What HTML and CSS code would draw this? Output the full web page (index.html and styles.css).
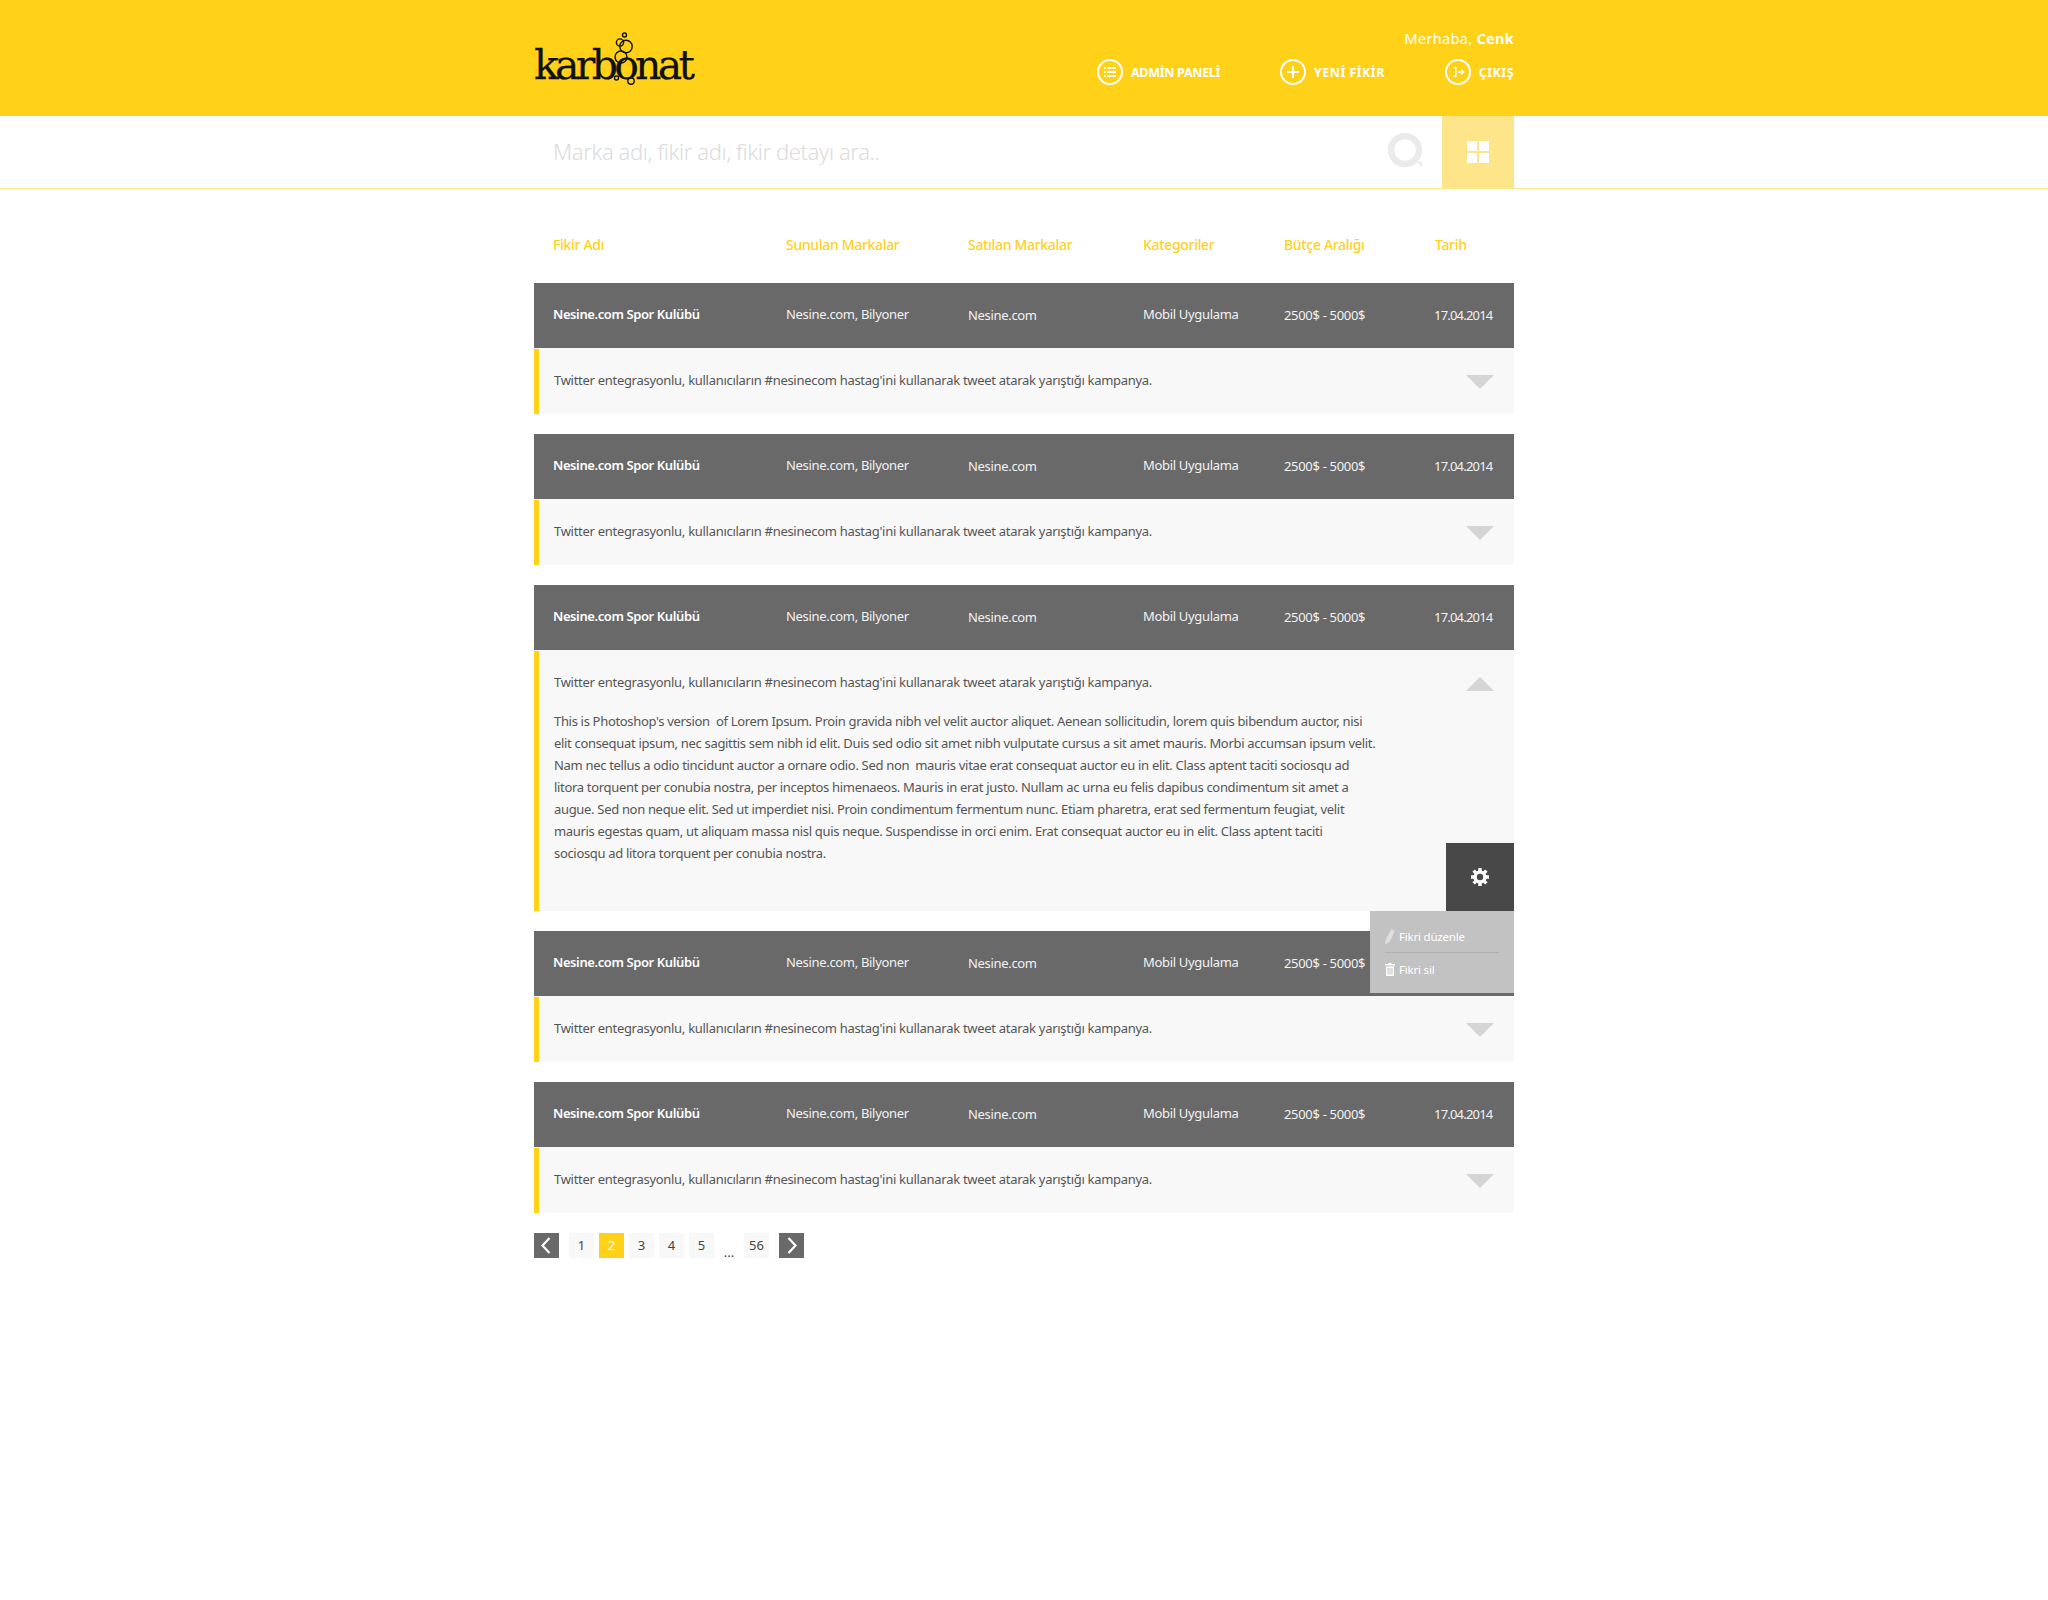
FILE: index.html
```html
<!DOCTYPE html>
<html lang="tr">
<head>
<meta charset="utf-8">
<title>Karbonat</title>
<link rel="stylesheet" href="styles.css">
</head>
<body>
<header class="topbar">
  <div class="wrap topbar-inner">
    <a class="logo">
      <span class="logo-text">karbonat</span>
      <svg class="logo-bubbles" width="60" height="60" viewBox="0 0 60 60" fill="none" stroke="#111" stroke-width="1.4">
        <circle cx="25.5" cy="5" r="2"/><circle cx="21" cy="12.5" r="3.6"/><circle cx="27" cy="16.5" r="6.2"/><circle cx="22" cy="27" r="6"/><circle cx="17.5" cy="48" r="2"/><circle cx="32" cy="51" r="3.2"/>
      </svg>
    </a>
    <div class="user">
      <div class="hello">Merhaba, <b>Cenk</b></div>
      <nav class="nav">
        <a class="nav-item tight">
          <svg class="ring" width="26" height="26" viewBox="0 0 26 26"><circle cx="13" cy="13" r="12" fill="none" stroke="#fff" stroke-width="2"/><path d="M7 8h2v2H7zM7 12h2v2H7zM7 16h2v2H7zM10 8h9v2h-9zM10 12h9v2h-9zM10 16h9v2h-9z" fill="#fff"/></svg>
          <span>ADMİN PANELİ</span>
        </a>
        <a class="nav-item">
          <svg class="ring" width="26" height="26" viewBox="0 0 26 26"><circle cx="13" cy="13" r="12" fill="none" stroke="#fff" stroke-width="2"/><path d="M12 7h2v5h5v2h-5v5h-2v-5H7v-2h5z" fill="#fff"/></svg>
          <span>YENİ FİKİR</span>
        </a>
        <a class="nav-item">
          <svg class="ring" width="26" height="26" viewBox="0 0 26 26"><circle cx="13" cy="13" r="12" fill="none" stroke="#fff" stroke-width="2"/><path d="M8 8h3.500v10H8v-1.500h2v-7H8zM13 12h3v-2l4 3-4 3v-2h-3z" fill="#fff"/></svg>
          <span>ÇIKIŞ</span>
        </a>
      </nav>
    </div>
  </div>
</header>

<section class="searchbar">
  <div class="wrap search-inner">
    <div class="search-field">Marka adı, fikir adı, fikir detayı ara..</div>
    <svg class="search-icon" width="34" height="36" viewBox="0 0 34 36"><circle cx="17" cy="17" r="14" fill="none" stroke="#ebebeb" stroke-width="6.5"/><path d="M28 28l6 1v5z" fill="#ebebeb"/></svg>
    <button class="view-btn" type="button">
      <svg width="22" height="22" viewBox="0 0 22 22" fill="#fff"><rect width="10" height="10"/><rect x="12" width="10" height="10"/><rect y="12" width="10" height="10"/><rect x="12" y="12" width="10" height="10"/></svg>
    </button>
  </div>
</section>

<main class="wrap">
  <div class="cols heads">
    <span>Fikir Adı</span><span>Sunulan Markalar</span><span>Satılan Markalar</span><span>Kategoriler</span><span>Bütçe Aralığı</span><span>Tarih</span>
  </div>

  <article class="idea">
    <div class="cols row"><strong>Nesine.com Spor Kulübü</strong><span>Nesine.com, Bilyoner</span><span class="low">Nesine.com</span><span>Mobil Uygulama</span><span class="low">2500$ - 5000$</span><span class="low date">17.04.2014</span></div>
    <div class="desc"><p class="lead">Twitter entegrasyonlu, kullanıcıların #nesinecom hastag'ini kullanarak tweet atarak yarıştığı kampanya.</p><i class="tri"></i></div>
  </article>

  <article class="idea">
    <div class="cols row"><strong>Nesine.com Spor Kulübü</strong><span>Nesine.com, Bilyoner</span><span class="low">Nesine.com</span><span>Mobil Uygulama</span><span class="low">2500$ - 5000$</span><span class="low date">17.04.2014</span></div>
    <div class="desc"><p class="lead">Twitter entegrasyonlu, kullanıcıların #nesinecom hastag'ini kullanarak tweet atarak yarıştığı kampanya.</p><i class="tri"></i></div>
  </article>

  <article class="idea open">
    <div class="cols row"><strong>Nesine.com Spor Kulübü</strong><span>Nesine.com, Bilyoner</span><span class="low">Nesine.com</span><span>Mobil Uygulama</span><span class="low">2500$ - 5000$</span><span class="low date">17.04.2014</span></div>
    <div class="desc">
      <p class="lead">Twitter entegrasyonlu, kullanıcıların #nesinecom hastag'ini kullanarak tweet atarak yarıştığı kampanya.</p><i class="tri up"></i>
      <p class="body">This is Photoshop's version&nbsp; of Lorem Ipsum. Proin gravida nibh vel velit auctor aliquet. Aenean sollicitudin, lorem quis bibendum auctor, nisi<br>elit consequat ipsum, nec sagittis sem nibh id elit. Duis sed odio sit amet nibh vulputate cursus a sit amet mauris. Morbi accumsan ipsum velit.<br>Nam nec tellus a odio tincidunt auctor a ornare odio. Sed non&nbsp; mauris vitae erat consequat auctor eu in elit. Class aptent taciti sociosqu ad<br>litora torquent per conubia nostra, per inceptos himenaeos. Mauris in erat justo. Nullam ac urna eu felis dapibus condimentum sit amet a<br>augue. Sed non neque elit. Sed ut imperdiet nisi. Proin condimentum fermentum nunc. Etiam pharetra, erat sed fermentum feugiat, velit<br>mauris egestas quam, ut aliquam massa nisl quis neque. Suspendisse in orci enim. Erat consequat auctor eu in elit. Class aptent taciti<br>sociosqu ad litora torquent per conubia nostra.</p>
      <button class="gear" type="button">
        <svg width="20" height="20" viewBox="0 0 20 20"><g stroke="#fff" stroke-width="3.4"><path d="M10 1v18M1 10h18M3.6 3.6l12.8 12.8M16.4 3.6L3.6 16.4"/></g><circle cx="10" cy="10" r="6.6" fill="#fff"/><circle cx="10" cy="10" r="3.2" fill="#484848"/></svg>
      </button>
      <div class="menu">
        <a class="menu-item edit"><svg width="10" height="15" viewBox="0 0 10 15"><path d="M6.500 0l3.500 1.500-5 11L1 15l-1-.5L.5 11z" fill="#dedede"/></svg><span>Fikri düzenle</span></a>
        <a class="menu-item"><svg width="10" height="13" viewBox="0 0 10 13" fill="#fff"><path d="M3.500 0h3v1H10v1.500H0V1h3.500zM1 3.500h8V13H1zM2.500 5v6.500h1V5zM4.500 5v6.500h1V5zM6.500 5v6.500h1V5z" fill-rule="evenodd"/></svg><span>Fikri sil</span></a>
      </div>
    </div>
  </article>

  <article class="idea">
    <div class="cols row"><strong>Nesine.com Spor Kulübü</strong><span>Nesine.com, Bilyoner</span><span class="low">Nesine.com</span><span>Mobil Uygulama</span><span class="low">2500$ - 5000$</span><span class="low date">17.04.2014</span></div>
    <div class="desc"><p class="lead">Twitter entegrasyonlu, kullanıcıların #nesinecom hastag'ini kullanarak tweet atarak yarıştığı kampanya.</p><i class="tri"></i></div>
  </article>

  <article class="idea">
    <div class="cols row"><strong>Nesine.com Spor Kulübü</strong><span>Nesine.com, Bilyoner</span><span class="low">Nesine.com</span><span>Mobil Uygulama</span><span class="low">2500$ - 5000$</span><span class="low date">17.04.2014</span></div>
    <div class="desc"><p class="lead">Twitter entegrasyonlu, kullanıcıların #nesinecom hastag'ini kullanarak tweet atarak yarıştığı kampanya.</p><i class="tri"></i></div>
  </article>

  <nav class="pager">
    <a class="pg dark"><svg width="25" height="25" viewBox="0 0 25 25"><path d="M15.500 5l-7 7.500 7 7.500" fill="none" stroke="#fff" stroke-width="2.200"/></svg></a>
    <a class="pg first">1</a><a class="pg on">2</a><a class="pg">3</a><a class="pg">4</a><a class="pg">5</a>
    <span class="dots">...</span>
    <a class="pg">56</a>
    <a class="pg dark next"><svg width="25" height="25" viewBox="0 0 25 25"><path d="M9.500 5l7 7.500-7 7.500" fill="none" stroke="#fff" stroke-width="2.200"/></svg></a>
  </nav>
</main>
</body>
</html>
```

FILE: styles.css
```css
* { box-sizing: border-box; }
html, body { margin: 0; padding: 0; }
body {
  background: #fff;
  min-height: 1600px;
  font-family: "Noto Sans", "Open Sans", sans-serif;
  font-size: 13px;
  letter-spacing: -0.32px;
  color: #555;
}
p { margin: 0; }
.wrap { width: 980px; margin-left: 534px; }

.topbar { height: 116px; background: #ffd119; }
.topbar-inner { height: 116px; display: flex; justify-content: space-between; }
.logo { position: relative; display: block; width: 170px; margin-top: 30px; height: 70px; }
.logo-text {
  display: block;
  margin-top: 13px;
  font-family: "DejaVu Serif", serif;
  font-size: 41px;
  line-height: 44px;
  letter-spacing: -3.75px;
  color: #111;
  -webkit-text-stroke: 0.25px #111;
}
.logo-bubbles { position: absolute; left: 65px; top: 0; }
.user { display: flex; flex-direction: column; align-items: flex-end; padding-top: 28px; }
.hello { color: #fff; font-size: 14.500px; line-height: 20px; letter-spacing: 0.3px; }
.nav { display: flex; gap: 60px; margin-top: 11px; }
.nav-item { display: flex; align-items: center; gap: 8px; color: #fff; font-weight: 700; font-size: 12.500px; letter-spacing: 0.45px; height: 26px; }
.nav-item.tight { letter-spacing: -0.3px; }

.searchbar { height: 73px; border-bottom: 1px solid #ffe78c; }
.search-inner { display: flex; align-items: flex-start; height: 72px; }
.search-field { flex: 1; padding: 17px 0 0 19px; font-size: 22px; line-height: 36px; font-weight: 300; color: #dcdcdc; letter-spacing: -0.4px; }
.search-icon { margin: 17px 20px 0 0; }
.view-btn { width: 72px; height: 72px; border: 0; padding: 0; background: #ffe58a; display: flex; align-items: center; justify-content: center; }

.cols { display: grid; grid-template-columns: 233px 182px 175px 141px 151px 1fr; padding-left: 19px; padding-right: 21px; }
.heads { height: 94px; align-items: center; color: #ffd119; font-weight: 500; font-size: 14px; letter-spacing: -0.32px; padding-top: 17px; }
.idea { position: relative; margin-bottom: 20px; }
.row { height: 65px; background: #696969; color: #f2f2f2; align-items: center; padding-bottom: 3px; }
.row strong { color: #fff; font-weight: 600; letter-spacing: -0.4px; }
.low { padding-top: 2px; }
.date { letter-spacing: -0.8px; margin-left: -1px; white-space: nowrap; }
.desc {
  position: relative;
  height: 66px;
  padding: 21px 0 0 20px;
  background: linear-gradient(#ffd119, #ffd119) left 1px / 5px 100% no-repeat, #f8f8f8;
}
.lead { line-height: 22px; letter-spacing: -0.29px; }
.tri { position: absolute; right: 20px; top: 27px; width: 0; height: 0; border-style: solid; border-width: 14px 14px 0; border-color: #d5d5d5 transparent transparent; }
.tri.up { border-width: 0 14px 14px; border-color: transparent transparent #d5d5d5; }
.open .desc { height: 261px; }
.body { margin-top: 17px; line-height: 22px; white-space: nowrap; }
.gear { position: absolute; right: 0; bottom: 0; width: 68px; height: 68px; border: 0; padding: 0; background: #484848; display: flex; align-items: center; justify-content: center; }
.menu { position: absolute; right: 0; top: 100%; width: 144px; height: 82px; background: #c2c2c2; padding: 10px 15px 0; z-index: 2; }
.menu-item { display: flex; align-items: center; gap: 4px; height: 31px; color: #fff; font-size: 11.500px; letter-spacing: -0.2px; }
.menu-item.edit { border-bottom: 1px solid #b0b0b0; height: 32px; }
.menu-item + .menu-item { margin-top: 1px; }

.pager { display: flex; align-items: flex-start; gap: 5px; height: 25px; }
.pg { width: 25px; height: 25px; display: flex; align-items: center; justify-content: center; background: #f8f8f8; color: #444; font-size: 13px; letter-spacing: 0; padding-bottom: 1px; }
.pg.dark { background: #696969; padding: 0; }
.pg.first { margin-left: 5px; }
.pg.next { margin-left: 5px; }
.pg.on { background: #ffd119; color: #fff; }
.dots { width: 20px; text-align: center; line-height: 33px; color: #444; font-size: 13px; letter-spacing: 0; padding-top: 3px; }
```
